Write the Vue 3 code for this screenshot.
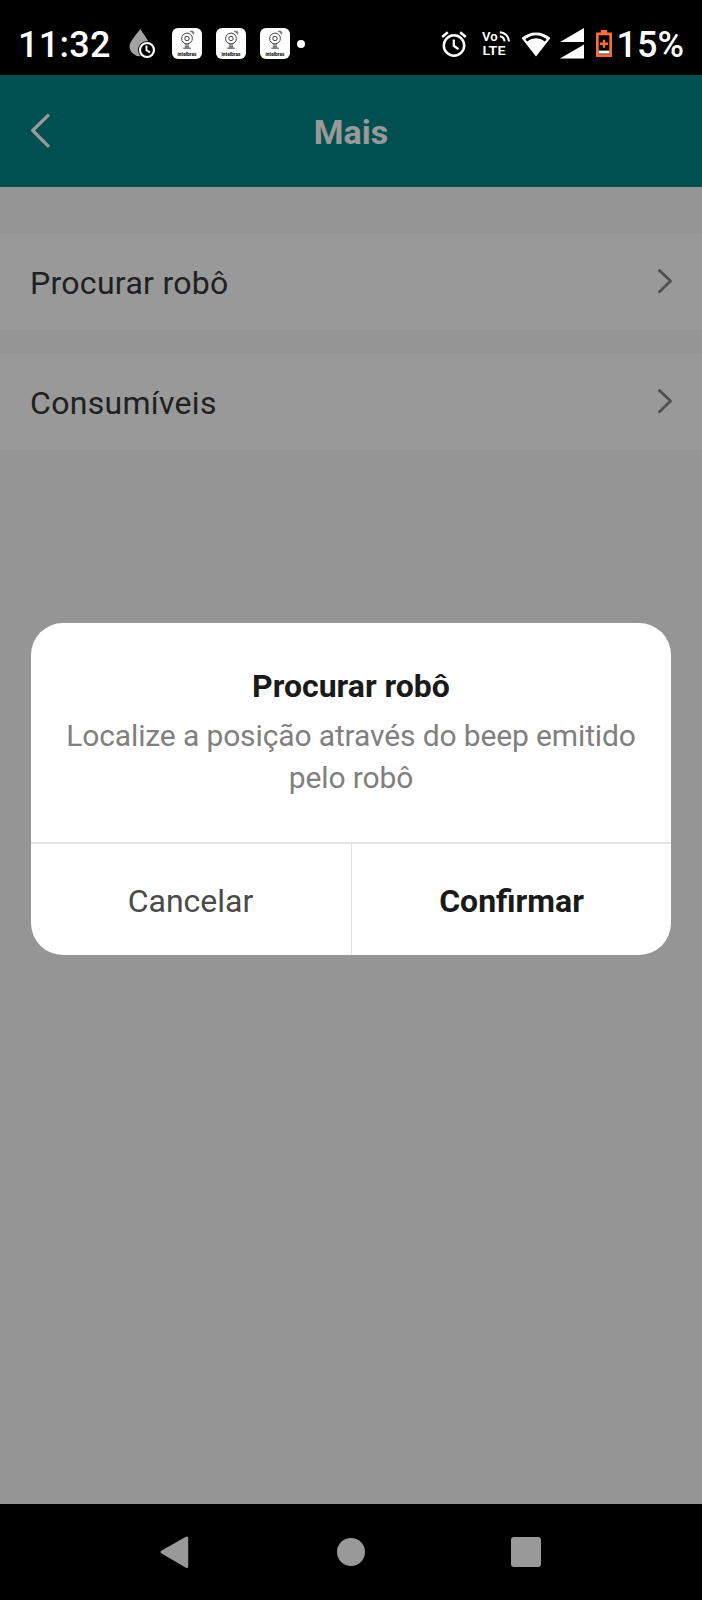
<!--Page "Mais" avec la boîte de dialogue pour localiser le robot-->
<script setup>
import { ref } from 'vue'

const time = ref('11:32')
const battery = ref('15%')

const items = ref([
  { id: 1, name: 'Procurar robô' },
  { id: 2, name: 'Consumíveis' }
])

const showDialog = ref(true)

const openItem = (item) => {
  if (item.id === 1) {
    showDialog.value = true
  }
}

const closeDialog = () => {
  showDialog.value = false
}
</script>

<template>
  <div class="phone">
    <div class="status-bar">
      <span class="time">{{ time }}</span>
      <svg class="drop" width="28" height="32" viewBox="0 0 28 32">
        <path d="M11.300 1C14 6 21 13 21 19a10.300 10.300 0 0 1-20.500 0C.5 13 8 6 11.300 1z" fill="#a3a3a3" />
        <circle cx="18" cy="22" r="9" fill="#000" />
        <circle cx="18" cy="22" r="7" fill="none" stroke="#fff" stroke-width="2.200" />
        <path d="M17.500 17.500v4.800l3.600 2.200" fill="none" stroke="#fff" stroke-width="1.900" />
      </svg>
      <svg v-for="n in 3" :key="n" class="app-icon" width="30" height="31" viewBox="0 0 30 31">
        <rect width="30" height="31" rx="6" fill="#fff" />
        <g fill="none" stroke="#444" stroke-width="1">
          <circle cx="15" cy="10.500" r="5.400" />
          <circle cx="15" cy="10.500" r="2.200" />
          <path d="M14 16v3M16 16v3M11.200 20.200h7.600M12.700 19h4.600" />
          <path d="M18.200 3.300a4 4 0 0 1 3.500 3.200M20 2.600l2.200 2.200" />
        </g>
        <text x="15" y="28.300" text-anchor="middle" textLength="19" lengthAdjust="spacingAndGlyphs" class="brand">intelbras</text>
      </svg>
      <span class="dot"></span>

      <div class="status-right">
        <svg class="alarm" width="26" height="28" viewBox="0 0 26 28">
          <circle cx="13" cy="15.500" r="10.200" fill="none" stroke="#fff" stroke-width="2.500" />
          <path d="M1.200 7l5.600-4.800M24.800 7l-5.600-4.800" stroke="#fff" stroke-width="2.600" fill="none" />
          <path d="M12.800 9.500v6.300l4.600 3.300" stroke="#fff" stroke-width="2.300" fill="none" />
        </svg>
        <svg class="volte" width="29" height="32" viewBox="0 0 29 32">
          <text x="0" y="12.600" textLength="15.500" lengthAdjust="spacingAndGlyphs">Vo</text>
          <text x="0.500" y="27.300" textLength="23" lengthAdjust="spacingAndGlyphs">LTE</text>
          <g fill="none" stroke="#fff" stroke-width="2">
            <path d="M17.800 8.200a5.500 5.500 0 0 1 4.700 5.400" />
            <path d="M17.800 4.200a9.500 9.500 0 0 1 9.200 9.400" />
          </g>
        </svg>
        <svg class="wifi" width="30" height="28" viewBox="0 0 30 28">
          <path d="M15 26.500L.5 8C8.500 .5 21.500 .5 29.500 8z" fill="#fff" />
          <path d="M4.300 9.300Q15 1.300 25.700 9.300L24 11.400Q15 5.200 6 11.400z" fill="#000" />
        </svg>
        <svg class="signal" width="24" height="31" viewBox="0 0 24 31">
          <path d="M24 0v14H0zM24 16.500v14H0z" fill="#fff" />
        </svg>
        <svg class="battery" width="16" height="27" viewBox="0 0 16 27">
          <path d="M4.800 0h6.400v2.500H16V27H0V2.500h4.800z" fill="#fb6a3c" />
          <path d="M2.700 5.300h10.600v18.900H2.700z" fill="#000" />
          <path d="M2.700 20.600h10.600v3H2.700z" fill="#fff" />
          <path d="M8 9.800v8M4 13.800h8" stroke="#fb6a3c" stroke-width="2.400" />
        </svg>
        <span class="percent">{{ battery }}</span>
      </div>
    </div>

    <div class="screen">
      <header class="header">
        <svg class="back" width="20" height="36" viewBox="0 0 20 36">
          <path d="M18 2.500L2.700 17.500 18 32.800" fill="none" stroke="#fff" stroke-width="3.200" stroke-linecap="round" stroke-linejoin="round" />
        </svg>
        <h1 class="header-title">Mais</h1>
      </header>

      <ul class="item-list">
        <li v-for="item in items" :key="item.id" class="item" @click="openItem(item)">
          <span class="item-name">{{ item.name }}</span>
          <svg class="chevron" width="14" height="26" viewBox="0 0 14 26">
            <path d="M1.500 1.500l11 10.600-11 10.700" fill="none" stroke="#858585" stroke-width="2.800" stroke-linecap="round" stroke-linejoin="round" />
          </svg>
        </li>
      </ul>

      <div v-if="showDialog" class="overlay">
        <div class="dialog">
          <div class="dialog-body">
            <h2 class="dialog-title">Procurar robô</h2>
            <p class="dialog-text">Localize a posição através do beep emitido pelo robô</p>
          </div>
          <div class="dialog-buttons">
            <button class="btn cancel" @click="closeDialog">Cancelar</button>
            <button class="btn confirm" @click="closeDialog">Confirmar</button>
          </div>
        </div>
      </div>
    </div>

    <nav class="nav-bar">
      <svg width="32" height="34" viewBox="0 0 32 34">
        <path d="M4 17L28.700 3v28.500z" fill="#999" stroke="#999" stroke-width="3" stroke-linejoin="round" />
      </svg>
      <span class="nav-home"></span>
      <span class="nav-recent"></span>
    </nav>
  </div>
</template>

<style>
body {
  margin: 0;
  background: #000;
}
</style>

<style scoped>
.phone {
  display: flex;
  flex-direction: column;
  width: 702px;
  height: 1600px;
  font-family: Roboto, sans-serif;
  overflow: hidden;
}

.status-bar {
  display: flex;
  align-items: center;
  box-sizing: border-box;
  height: 75px;
  padding: 12px 18px 0 18px;
  background: #000;
  color: #fff;
}

.time,
.percent {
  padding-top: 2px;
  font-size: 36px;
  font-weight: 500;
  line-height: 42px;
  white-space: nowrap;
}

.time {
  width: 111px;
  letter-spacing: 0.25px;
}

.drop {
  margin-right: 14.7px;
}

.app-icon {
  margin-right: 14.2px;
}

.brand {
  font-size: 5px;
  font-weight: 900;
  fill: #222;
}

.dot {
  width: 8px;
  height: 8px;
  margin-left: -7px;
  border-radius: 50%;
  background: #fff;
}

.status-right {
  display: flex;
  align-items: center;
  margin-left: auto;
}

.alarm {
  margin-right: 14.5px;
}

.volte {
  margin-right: 10px;
}

.volte text {
  font-size: 13.2px;
  font-weight: 600;
  fill: #fff;
}

.wifi {
  margin-right: 9px;
}

.signal {
  margin-right: 12.5px;
}

.battery {
  margin-right: 4.5px;
}

.screen {
  position: relative;
  flex: 1;
  background: #f8f8f8;
}

.header {
  display: grid;
  grid-template-columns: 1fr auto 1fr;
  align-items: center;
  height: 112px;
  padding: 0 30px;
  background: #008588;
  color: #fff;
}

.header-title {
  margin: 2px 0 0;
  font-size: 34px;
  font-weight: 700;
  line-height: 40px;
}

.item-list {
  display: flex;
  flex-direction: column;
  gap: 24px;
  margin: 47px 0 0;
  padding: 0;
  list-style-type: none;
}

.item {
  display: flex;
  align-items: center;
  justify-content: space-between;
  height: 96px;
  padding: 0 30px;
  background: #fff;
  cursor: pointer;
}

.item-name {
  padding-top: 1px;
  font-size: 32px;
  letter-spacing: 0.3px;
  color: #363636;
}

.overlay {
  position: absolute;
  inset: 0;
  display: flex;
  align-items: center;
  justify-content: center;
  box-sizing: border-box;
  padding-bottom: 1px;
  background: rgba(0, 0, 0, 0.4);
}

.dialog {
  width: 640px;
  height: 332px;
  display: flex;
  flex-direction: column;
  border-radius: 32px;
  background: #fff;
  overflow: hidden;
}

.dialog-body {
  flex: 1;
  padding: 44px 30px 0;
  text-align: center;
}

.dialog-title {
  margin: 0;
  font-size: 32px;
  font-weight: 700;
  line-height: 38px;
  color: #1a1a1a;
}

.dialog-text {
  margin: 10px 0 0;
  font-size: 30px;
  line-height: 42px;
  letter-spacing: -0.13px;
  color: #808080;
}

.dialog-buttons {
  display: grid;
  grid-template-columns: 321px 319px;
  height: 111px;
  border-top: 2px solid #e5e5e5;
}

.btn {
  padding: 2px 0 0;
  border: none;
  background: none;
  font-family: inherit;
  font-size: 32px;
  cursor: pointer;
}

.cancel {
  padding-right: 1px;
  border-right: 1px solid #e2e2e2;
  color: #4a4a4a;
}

.confirm {
  font-weight: 700;
  color: #1a1a1a;
}

.nav-bar {
  display: flex;
  align-items: center;
  justify-content: space-between;
  height: 96px;
  padding: 0 161px 0 158px;
  background: #000;
}

.nav-home {
  width: 28px;
  height: 28px;
  border-radius: 50%;
  background: #999;
}

.nav-recent {
  width: 30px;
  height: 30px;
  border-radius: 3px;
  background: #999;
}
</style>
